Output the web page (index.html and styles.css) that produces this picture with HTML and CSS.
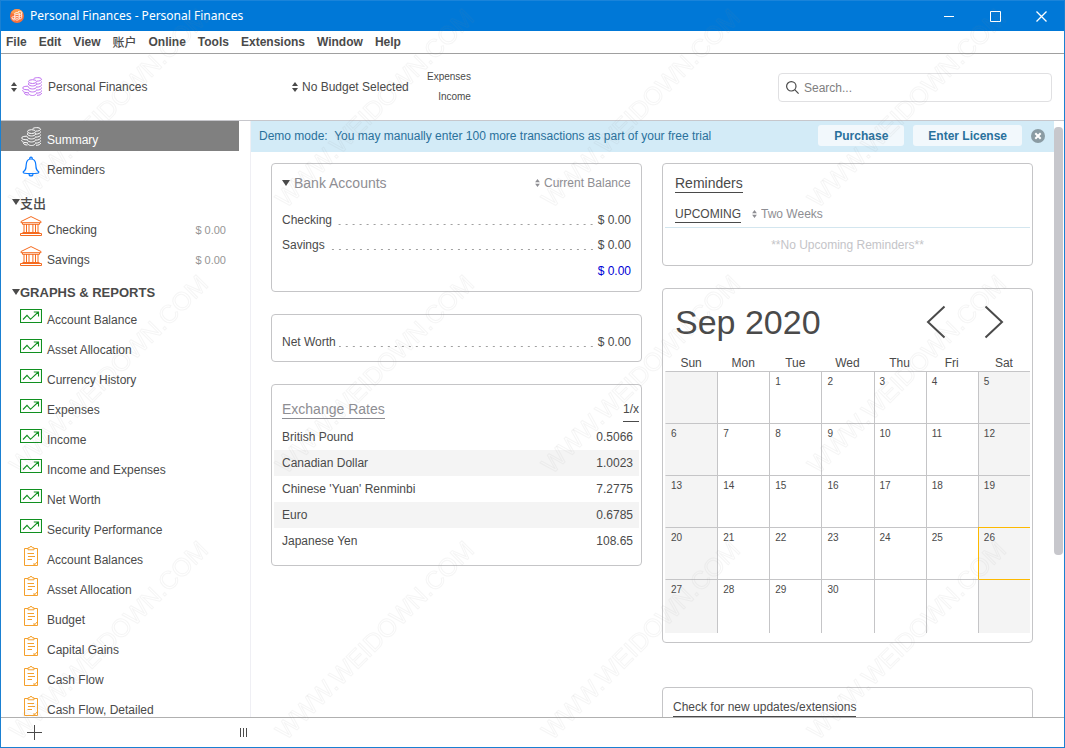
FILE: index.html
```html
<!DOCTYPE html>
<html lang="en">
<head>
<meta charset="utf-8">
<title>Personal Finances - Personal Finances</title>
<link rel="stylesheet" href="styles.css">
</head>
<body>
<svg class="sprite" aria-hidden="true">
  <symbol id="updown" viewBox="0 0 6 10"><path d="M3 0 6 4H0zM3 10 0 6h6z" fill="currentColor"/></symbol>
  <symbol id="coins" viewBox="0 0 21 20">
    <g fill="none" stroke="currentColor" stroke-width="1">
      <ellipse cx="10.5" cy="4.6" rx="4" ry="1.9"/>
      <path d="M6.500 6.500c-.6 3.300 8.600 3.300 8 0M6.500 9.500c-.6 3.300 8.600 3.300 8 0M6.500 12.500c-.6 3.300 8.600 3.300 8 0M6.500 15.500c-.6 4 8.600 4 8 0M6.500 6.500v1M14.500 6.500v1"/>
      <path d="M11.500 1.900c1-1.600 7.500-1.900 8 .3 0 1.300-2 1.900-4.500 1.900M19.500 4.500c.3 1.700-2 2.600-4.500 2.600M19.500 7.500c.3 1.700-2 2.600-4.500 2.600M19.500 10.500c.3 1.700-2 2.600-4.500 2.600M19.500 13.500c.3 1.700-2 2.600-4.500 2.600M19.500 16c.3 1.500-2 2.300-4.500 2.300"/>
      <path d="M6 9.200c-3 0-5.300.5-5.300 1.800s2.300 1.800 5.600 1.800M.7 13c-.2 2 2.300 2.700 5.600 2.700M2.500 16c0 1.500 2 2 4 2"/>
    </g>
  </symbol>
  <symbol id="bell" viewBox="0 0 18 21">
    <path d="M1.300 15.700c2.600-1.500 2.700-3.300 2.900-7C4.400 5 6.200 3 9 3s4.600 2 4.800 5.700c.2 3.700.3 5.500 2.900 7 .6 1.500-1.500 1.900-7.700 1.900s-8.300-.4-7.700-1.900zM7.700 3c-.4-2.400 3-2.400 2.600 0M7 17.700c0 3 4 3 4 0" fill="none" stroke="currentColor" stroke-width="1.200"/>
  </symbol>
  <symbol id="bank" viewBox="0 0 22 20">
    <path d="M11 .6 1 5.500v1.200h20V5.500zM2.500 7v1.300h17V7M4 8v8M6.500 8v8M9 8v8M12.900 8v8M15.500 8v8M18 8v8M2.500 16.500h17M.5 19.500v-2h21v2z" fill="none" stroke="currentColor"/>
  </symbol>
  <symbol id="graph" viewBox="0 0 22 14">
    <path d="M.5.500h21v13H.5zM3 10.500l4-4.200 3.500 4L18.300 3M13.800 3h4.700v4.500" fill="none" stroke="currentColor" stroke-width="1.100"/>
  </symbol>
  <symbol id="report" viewBox="0 0 14 20">
    <path d="M4 2.500H.5v17h13v-17H10M4 1.800h1.500c0-1.800 3-1.800 3 0H10v2H4zM3.500 7.500H10M4 10.500h7M3.500 13.500H8M13.500 15.500 10 19.500v-2.500" fill="none" stroke="currentColor"/>
  </symbol>
</svg>

<div class="window">
  <header class="titlebar">
    <svg class="app-icon" viewBox="0 0 14 14"><circle cx="7" cy="7" r="7" fill="#f9703a"/><path d="M1 4a7 7 0 0 1 6-4c3 0 5 2 6 4L7 6z" fill="#fc9a4f"/><g fill="none" stroke="#fff" stroke-width=".8"><ellipse cx="7" cy="4.500" rx="2.200" ry="1"/><path d="M4.800 4.500v5.500c0 1.500 4.400 1.500 4.400 0V4.500M4.800 6.500c0 1.400 4.400 1.400 4.400 0M4.800 8.300c0 1.400 4.400 1.400 4.400 0M8 2.700c1.500-.8 3.700-.4 3.700.5v5.500c0 .8-1 1.200-2.500 1.200M9.200 5.500c1.500 0 2.500-.4 2.500-1M9.200 7.500c1.500 0 2.500-.4 2.500-1M4.800 7.500c-3 0-3.300 1-2.500 1.700.5.400 1 .5 2.500.5M2.200 9c0 1.500 1 2 2.600 2"/></g></svg>
    <h1>Personal Finances - Personal Finances</h1>
    <div class="window-buttons">
      <button type="button" aria-label="Minimize"><svg viewBox="0 0 11 11"><path d="M0 5.500h10"/></svg></button>
      <button type="button" aria-label="Maximize"><svg viewBox="0 0 11 11"><path d="M.5.500h10v10h-10z"/></svg></button>
      <button type="button" aria-label="Close"><svg viewBox="0 0 11 11"><path d="M.5.500l10 10M10.500.500l-10 10" stroke-width="1.300"/></svg></button>
    </div>
  </header>

  <nav class="menubar" aria-label="Menu">
    <button type="button">File</button><button type="button">Edit</button><button type="button">View</button><button type="button" class="cjk">账户</button><button type="button">Online</button><button type="button">Tools</button><button type="button">Extensions</button><button type="button">Window</button><button type="button">Help</button>
  </nav>

  <div class="toolbar">
    <label class="picker file-picker"><svg class="arrows"><use href="#updown"/></svg><svg class="coins"><use href="#coins"/></svg><select aria-label="Data file"><option>Personal Finances</option></select></label>
    <label class="picker"><svg class="arrows"><use href="#updown"/></svg><select aria-label="Budget"><option>No Budget Selected</option></select></label>
    <div class="budget-bars"><span>Expenses</span><span>Income</span></div>
    <label class="search"><svg viewBox="0 0 13 13"><circle cx="5.300" cy="5.300" r="4.700"/><path d="M8.700 8.700l3.900 3.900"/></svg><input type="text" placeholder="Search..." aria-label="Search"></label>
  </div>

  <div class="workspace">
    <aside class="sidebar">
      <a class="item selected" href="#"><svg class="coins"><use href="#coins"/></svg><span>Summary</span></a>
      <a class="item" href="#"><svg class="bell"><use href="#bell"/></svg><span>Reminders</span></a>
      <h2 class="cjk"><i class="caret"></i>支出</h2>
      <a class="item" href="#"><svg class="bank"><use href="#bank"/></svg><span>Checking</span><span class="balance">$ 0.00</span></a>
      <a class="item" href="#"><svg class="bank"><use href="#bank"/></svg><span>Savings</span><span class="balance">$ 0.00</span></a>
      <h2><i class="caret"></i>GRAPHS &amp; REPORTS</h2>
      <a class="item" href="#"><svg class="graph"><use href="#graph"/></svg><span>Account Balance</span></a>
      <a class="item" href="#"><svg class="graph"><use href="#graph"/></svg><span>Asset Allocation</span></a>
      <a class="item" href="#"><svg class="graph"><use href="#graph"/></svg><span>Currency History</span></a>
      <a class="item" href="#"><svg class="graph"><use href="#graph"/></svg><span>Expenses</span></a>
      <a class="item" href="#"><svg class="graph"><use href="#graph"/></svg><span>Income</span></a>
      <a class="item" href="#"><svg class="graph"><use href="#graph"/></svg><span>Income and Expenses</span></a>
      <a class="item" href="#"><svg class="graph"><use href="#graph"/></svg><span>Net Worth</span></a>
      <a class="item" href="#"><svg class="graph"><use href="#graph"/></svg><span>Security Performance</span></a>
      <a class="item" href="#"><svg class="report"><use href="#report"/></svg><span>Account Balances</span></a>
      <a class="item" href="#"><svg class="report"><use href="#report"/></svg><span>Asset Allocation</span></a>
      <a class="item" href="#"><svg class="report"><use href="#report"/></svg><span>Budget</span></a>
      <a class="item" href="#"><svg class="report"><use href="#report"/></svg><span>Capital Gains</span></a>
      <a class="item" href="#"><svg class="report"><use href="#report"/></svg><span>Cash Flow</span></a>
      <a class="item" href="#"><svg class="report"><use href="#report"/></svg><span>Cash Flow, Detailed</span></a>
    </aside>

    <main class="main">
      <div class="banner">
        <p>Demo mode:&nbsp; You may manually enter 100 more transactions as part of your free trial</p>
        <button type="button" class="banner-button">Purchase</button>
        <button type="button" class="banner-button">Enter License</button>
        <button type="button" class="dismiss" aria-label="Dismiss"><svg viewBox="0 0 14 14"><circle cx="7" cy="7" r="7" fill="#8a9ba3"/><path d="M4.300 4.300l5.400 5.400M9.700 4.300l-5.400 5.400" stroke="#fff" stroke-width="2"/></svg></button>
      </div>
      <div class="columns">
        <div class="column">
          <section class="card accounts">
            <div class="accounts-head">
              <h3><i class="caret"></i>Bank Accounts</h3>
              <label class="picker muted"><svg class="arrows small"><use href="#updown"/></svg><select aria-label="Balance type"><option>Current Balance</option></select></label>
            </div>
            <div class="line"><span>Checking</span><i class="leader"></i><span>$ 0.00</span></div>
            <div class="line"><span>Savings</span><i class="leader"></i><span>$ 0.00</span></div>
            <div class="line total"><span>$ 0.00</span></div>
          </section>
          <section class="card worth">
            <div class="line"><span>Net Worth</span><i class="leader"></i><span>$ 0.00</span></div>
          </section>
          <section class="card rates">
            <div class="rates-head"><h3><a href="#">Exchange Rates</a></h3><a class="invert" href="#">1/x</a></div>
            <table>
              <tr><td>British Pound</td><td>0.5066</td></tr>
              <tr><td>Canadian Dollar</td><td>1.0023</td></tr>
              <tr><td>Chinese 'Yuan' Renminbi</td><td>7.2775</td></tr>
              <tr><td>Euro</td><td>0.6785</td></tr>
              <tr><td>Japanese Yen</td><td>108.65</td></tr>
            </table>
          </section>
        </div>
        <div class="column">
          <section class="card reminders">
            <h3><a href="#">Reminders</a></h3>
            <div class="upcoming"><a href="#">UPCOMING</a><label class="picker muted"><svg class="arrows small"><use href="#updown"/></svg><select aria-label="Reminder range"><option>Two Weeks</option></select></label></div>
            <p>**No Upcoming Reminders**</p>
          </section>
          <section class="card calendar">
            <div class="calendar-head">
              <h3>Sep 2020</h3>
              <button type="button" aria-label="Previous month"><svg viewBox="0 0 20 34"><path d="M18.500 1.500 2 17l16.500 15.500"/></svg></button>
              <button type="button" aria-label="Next month"><svg viewBox="0 0 20 34"><path d="M1.500 1.500 18 17 1.500 32.500"/></svg></button>
            </div>
            <table>
              <thead><tr><th>Sun</th><th>Mon</th><th>Tue</th><th>Wed</th><th>Thu</th><th>Fri</th><th>Sat</th></tr></thead>
              <tbody>
                <tr><td></td><td></td><td>1</td><td>2</td><td>3</td><td>4</td><td>5</td></tr>
                <tr><td>6</td><td>7</td><td>8</td><td>9</td><td>10</td><td>11</td><td>12</td></tr>
                <tr><td>13</td><td>14</td><td>15</td><td>16</td><td>17</td><td>18</td><td>19</td></tr>
                <tr><td>20</td><td>21</td><td>22</td><td>23</td><td>24</td><td>25</td><td class="today">26</td></tr>
                <tr><td>27</td><td>28</td><td>29</td><td>30</td><td></td><td></td><td class="after-today"></td></tr>
              </tbody>
            </table>
          </section>
          <section class="card updates"><a href="#">Check for new updates/extensions</a></section>
        </div>
      </div>
    </main>
    <div class="scrollbar"><div class="thumb"></div></div>
  </div>

  <footer class="statusbar">
    <button type="button" aria-label="Add"><svg viewBox="0 0 15 15"><path d="M7.500 0v15M0 7.500h15"/></svg></button>
    <span class="grip"></span>
  </footer>
</div>

<svg class="watermark" aria-hidden="true">
  <defs><pattern id="mark" width="266" height="266" patternUnits="userSpaceOnUse"><text class="mark-text" transform="translate(20 209) rotate(-45)">WWW.WEIDOWN.COM</text></pattern></defs>
  <rect width="100%" height="100%" fill="url(#mark)"/>
</svg>
</body>
</html>
```
FILE: styles.css
```css
* { box-sizing: border-box; }
body {
  margin: 0;
  font: 12px/16px "Liberation Sans", "Noto Sans CJK SC", sans-serif;
  color: #4a4a4a;
  background: #fff;
}
h1, h2, h3, p { margin: 0; font-weight: normal; }
a { color: inherit; text-decoration: none; }
button, select, input { font: inherit; color: inherit; background: none; border: 0; padding: 0; margin: 0; }
select { appearance: none; height: 16px; outline: 0; }
svg { display: block; flex: none; }
table { border-collapse: separate; border-spacing: 0; width: 100%; }
.sprite { position: absolute; width: 0; height: 0; }
.cjk { font-family: "Noto Sans CJK SC", sans-serif; }

.window {
  display: flex;
  flex-direction: column;
  height: 100vh;
  border: 1px solid #1a80d2;
  border-top: 0;
}

.titlebar {
  display: flex;
  align-items: center;
  height: 31px;
  padding-left: 9px;
  background: #0078d7;
  border-top: 1px solid #1a84da;
  color: #fff;
}
.app-icon { width: 14px; height: 14px; }
.titlebar h1 { flex: 1; margin-left: 6px; font: 12px/16px "Noto Sans", sans-serif; }
.window-buttons { display: flex; }
.window-buttons button { display: grid; place-items: center; width: 46px; height: 29px; }
.window-buttons svg { width: 11px; height: 11px; fill: none; stroke: #fff; }

.menubar {
  display: flex;
  gap: 12px;
  height: 23px;
  padding: 0 5px;
  border-bottom: 1px solid #a0a0a0;
}
.menubar button { font-weight: bold; height: 22px; }
.menubar .cjk { font-weight: 500; }

.toolbar {
  display: flex;
  align-items: center;
  height: 67px;
  padding: 0 12px 0 10px;
  border-bottom: 1px solid #c7c7cc;
  font-size: 12px;
}
.picker { display: flex; align-items: center; gap: 4px; }
.arrows { width: 6px; height: 10px; }
.arrows.small { width: 5px; height: 8px; }
.coins { width: 21px; height: 20px; }
.file-picker { width: 281px; gap: 5px; }
.file-picker .coins { color: #bf6ff0; }
.budget-bars { display: grid; gap: 4px; margin-left: 18px; font-size: 10px; text-align: right; }
.search {
  display: flex;
  align-items: center;
  gap: 5px;
  width: 274px;
  height: 29px;
  margin-left: auto;
  padding: 0 7px;
  border: 1px solid #e0e0e2;
  border-radius: 4px;
}
.search svg { width: 13px; height: 13px; fill: none; stroke: #4a4a4a; stroke-width: 1.2; }
.search input { flex: 1; min-width: 0; padding-top: 2px; outline: 0; }
.search input::placeholder { color: #808080; opacity: 1; }

.workspace { display: flex; flex: 1; min-height: 0; overflow: hidden; }
.sidebar { flex: none; width: 250px; overflow: hidden; border-right: 1px solid #efeff4; }
.item {
  display: grid;
  grid-template-columns: 22px 1fr auto;
  align-items: start;
  gap: 5px;
  width: 238px;
  height: 30px;
  padding: 5px 13px 0 19px;
}
.item svg { justify-self: center; }
.item span { padding-top: 6px; }
.item .balance { color: #969696; font-size: 11px; }
.item.selected { background: #808080; color: #fff; }
.item .coins { margin-top: 1px; }
.bell { width: 18px; height: 21px; color: #0a7aff; }
.bank { width: 22px; height: 20px; color: #f56a1f; }
.item .graph { width: 22px; height: 14px; margin-top: 3px; color: #109020; }
.report { width: 14px; height: 20px; color: #f5a02c; }
.sidebar h2 {
  display: flex;
  height: 30px;
  padding: 14px 0 0 11px;
  font-size: 13px;
  line-height: 16px;
  font-weight: bold;
}
.sidebar h2.cjk { font-weight: 500; }
.caret { width: 8px; height: 6px; background: #4a4a4a; clip-path: polygon(0 0, 100% 0, 50% 100%); }
.sidebar .caret { margin-top: 4px; }

.main { flex: 1; min-width: 0; overflow: hidden; }
.banner {
  display: flex;
  align-items: center;
  gap: 9px;
  height: 31px;
  padding: 0 9px 2px 8px;
  background: #d3ebf7;
  color: #2a719c;
}
.banner p { flex: 1; white-space: nowrap; }
.banner-button { min-width: 86px; height: 21px; padding: 0 15px; border-radius: 3px; background: #f2f8fc; font-weight: bold; }
.dismiss svg { width: 14px; height: 14px; }

.columns { display: grid; grid-template-columns: 1fr 1fr; gap: 20px; padding: 11px 21px 0 20px; }
.column { display: flex; flex-direction: column; gap: 22px; min-width: 0; }
.card { border: 1px solid #c5c5c7; border-radius: 4px; }
.card h3 { font-size: 14px; }
.muted { color: #8e8e93; }

.accounts { padding: 11px 10px 12px; }
.accounts-head { display: flex; justify-content: space-between; align-items: center; margin-bottom: 21px; }
.accounts h3 { display: flex; align-items: center; gap: 4px; color: #8e8e93; }
.line { display: flex; height: 17px; margin-bottom: 8px; white-space: nowrap; }
.line.total { justify-content: flex-end; padding-top: 1px; margin: 0; color: #0000d6; }
.leader {
  flex: 1;
  height: 1px;
  margin: 12px 5px 0 3px;
  background: linear-gradient(90deg, transparent 5px, #a0a0a0 5px) right 0 / 7px 1px repeat-x;
}
.worth { padding: 19px 10px 2px; }

.rates { padding: 16px 2px 11px; }
.rates-head { display: flex; justify-content: space-between; padding-left: 8px; height: 23px; }
.rates h3 { color: #8e8e93; }
.rates h3 a, .invert, .reminders a, .updates a { border-bottom: 1px solid currentColor; }
.rates h3 a { display: block; height: 18px; }
.invert { height: 21px; }
.rates td { height: 26px; padding: 0 8px; }
.rates td:last-child { padding-right: 6px; text-align: right; }
.rates tr:nth-child(even) { background: #f4f4f4; }

.reminders { padding: 11px 2px 12px; }
.reminders h3 { padding-left: 10px; }
.reminders h3 a { display: inline-block; height: 18px; }
.upcoming { display: flex; align-items: flex-start; gap: 11px; height: 35px; padding: 13px 10px 0; border-bottom: 1px solid #d3e6ef; }
.upcoming a { height: 17px; }
.reminders p { padding-top: 9px; text-align: center; color: #c4c4c8; }
.upcoming + p { min-height: 25px; }

.calendar { padding: 8px 2px 9px; }
.calendar-head { display: flex; align-items: center; height: 50px; padding: 0 26px 0 10px; gap: 38px; }
.calendar-head h3 { flex: 1; font-size: 34px; line-height: 40px; }
.calendar-head svg { width: 20px; height: 34px; fill: none; stroke: #4a4a4a; stroke-width: 2; }
.calendar table { table-layout: fixed; }
.calendar th { height: 24px; padding: 8px 0 0; font-weight: normal; }
.calendar td {
  height: 52px;
  padding: 2px 5px;
  vertical-align: top;
  border-top: 1px solid #c5c5c7;
  border-left: 1px solid #c5c5c7;
  font-size: 10px;
}
.calendar td:first-child { border-left-color: #f4f4f4; }
.calendar td:first-child, .calendar td:last-child { background: #f4f4f4; }
.calendar tr:last-child td { height: 54px; }
.calendar td.today { border-color: #fdb900; }
.calendar td.after-today { border-top-color: #fdb900; }
.updates { margin-top: 22px; padding: 11px 10px; }
.updates a { display: inline-block; height: 18px; }

.scrollbar { flex: none; width: 10px; padding: 6px 1px 0 0; }
.thumb { height: 428px; border-radius: 4px; background: #c7c7cc; }

.statusbar {
  display: flex;
  align-items: center;
  flex: none;
  height: 30px;
  padding-left: 26px;
  border-top: 1px solid #b0b0b0;
}
.statusbar svg { width: 15px; height: 15px; stroke: #4a4a4a; }
.grip { width: 7px; height: 9px; margin-left: 198px; background: repeating-linear-gradient(90deg, #4a4a4a 0 1px, transparent 1px 3px); }

.watermark { position: absolute; inset: 0; width: 100%; height: 100%; pointer-events: none; }
.mark-text { font: 25px "Liberation Sans", sans-serif; fill: none; stroke: #808080; stroke-opacity: .08; }
```
